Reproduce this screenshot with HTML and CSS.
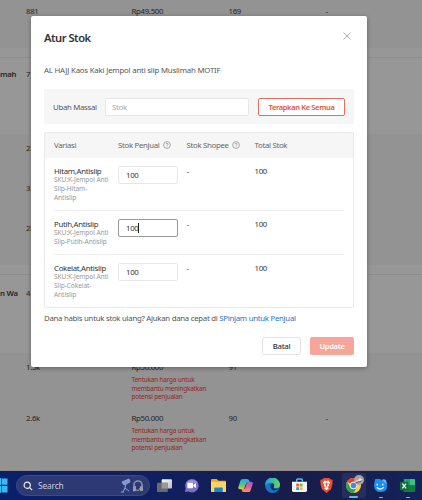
FILE: index.html
```
<!DOCTYPE html>
<html lang="id">
  <head>
    <meta charset="utf-8">
    <title>Atur Stok</title>
    <link rel="stylesheet" href="styles.css">
  </head>
  <body>
    <main class="products">
      <div class="row first shade"><b></b><span>881</span><span>Rp49.500</span><span>169</span><span>-</span></div>
      <div class="gap"></div>
      <div class="row product"><b>mah</b><span>7</span></div>
      <div class="row variant shade"><b></b><span>2.</span></div>
      <div class="row variant shade"><b></b><span>3.</span></div>
      <div class="row variant last shade"><b></b><span>2l</span></div>
      <div class="gap"></div>
      <div class="row product second"><b>n Wa</b><span>4</span></div>
      <div class="row priced shade"><b></b><span>1.5k</span>
        <div>Rp50.000<p class="warn">Tentukan harga untuk<br>membantu meningkatkan<br>potensi penjualan</p></div>
        <span>91</span><span></span></div>
      <div class="row priced shade"><b></b><span>2.6k</span>
        <div>Rp50.000<p class="warn">Tentukan harga untuk<br>membantu meningkatkan<br>potensi penjualan</p></div>
        <span>90</span><span>-</span></div>
    </main>

    <section class="modal">
      <header>
        <h1>Atur Stok</h1>
        <svg class="close" viewBox="0 0 8 8"><path d="M.5 .5l7 7M7.5 .5l-7 7"/></svg>
      </header>
      <p class="name">AL HAJJ Kaos Kaki Jempol anti slip Muslimah MOTIF</p>
      <div class="bulk">
        <label>Ubah Massal</label>
        <div class="input placeholder">Stok</div>
        <button class="apply">Terapkan Ke Semua</button>
      </div>
      <div class="stock">
        <div class="line head">
          <span>Variasi</span>
          <span class="help">Stok Penjual <svg viewBox="0 0 8 8"><circle cx="4" cy="4" r="3.4"/><path d="M3 3.2c0-1.4 2-1.4 2 0 0 .7-1 .7-1 1.5M4 5.5v.6"/></svg></span>
          <span class="help">Stok Shopee <svg viewBox="0 0 8 8"><circle cx="4" cy="4" r="3.4"/><path d="M3 3.2c0-1.4 2-1.4 2 0 0 .7-1 .7-1 1.5M4 5.5v.6"/></svg></span>
          <span>Total Stok</span>
        </div>
        <div class="line">
          <div class="variation">Hitam,Antislip<small>SKU:K-Jempol Anti<br>Slip-Hitam-<br>Antislip</small></div>
          <div class="input">100</div>
          <span>-</span>
          <span>100</span>
        </div>
        <div class="line short">
          <div class="variation">Putih,Antislip<small>SKU:K-Jempol Anti<br>Slip-Putih-Antislip</small></div>
          <div class="input focus">100<i class="caret"></i></div>
          <span>-</span>
          <span>100</span>
        </div>
        <div class="line">
          <div class="variation">Cokelat,Antislip<small>SKU:K-Jempol Anti<br>Slip-Cokelat-<br>Antislip</small></div>
          <div class="input">100</div>
          <span>-</span>
          <span>100</span>
        </div>
      </div>
      <p class="loan">Dana habis untuk stok ulang? Ajukan dana cepat di <a>SPinjam untuk Penjual</a></p>
      <footer>
        <button class="cancel">Batal</button>
        <button class="update">Update</button>
      </footer>
    </section>

    <nav class="taskbar">
      <svg class="start" viewBox="0 0 8 15"><path d="M0 0h1v7H0zM0 8h1v7H0zM1.5 .5h6v6.3h-6zM1.5 8h6v6.5h-6z"/></svg>
      <div class="search">
        <svg class="glass" viewBox="0 0 10 10"><circle cx="4.2" cy="4.2" r="3.1"/><path d="M6.6 6.6l2.6 2.6"/></svg>
        <span>Search</span>
        <svg class="doodle" viewBox="0 0 24 16">
          <path d="M2 4l7-3 1 3-6 3zM6 6l-1 4-2 4M5 10l4 3M1 14h3" fill="#8496cc" stroke="#8fa3d8"/>
          <path d="M14 11V7a4 4 0 0 1 8 0v4" fill="none" stroke="#8792ad" stroke-width="1.6"/>
          <path d="M13 9l3-1v5l-3 .5zM20 8l3 1v4l-3 0z" fill="#939cb0"/>
          <path d="M16 12q3 2 4-2" fill="none" stroke="#b1a57c"/>
        </svg>
      </div>
      <div class="apps">
        <svg viewBox="0 0 16 16">
          <defs><linearGradient id="tv" x1="0" y1="0" x2="1" y2="1"><stop offset="0" stop-color="#fff"/><stop offset="1" stop-color="#bbb"/></linearGradient></defs>
          <rect x="5" y="1.2" width="11" height="10" rx="1" fill="url(#tv)"/><rect x="0" y="5" width="11.5" height="10" rx="1" fill="#666b70"/><path d="M5 5h6.5v6.2H5z" fill="#999"/>
        </svg>
        <svg viewBox="0 0 16 16">
          <path d="M1 15l.8-4A7.2 7.2 0 1 1 5 14.5z" fill="#7a70c8"/><path d="M2 6a7 7 0 0 1 12-1z" fill="#9891da"/>
          <rect x="3.6" y="5" width="6" height="6" rx="1" fill="#fff"/><path d="M10 7.3l2.8-2v5.4L10 8.7z" fill="#fff"/>
        </svg>
        <svg viewBox="0 0 16 16">
          <path d="M0 2q0-1 1-1h5l2 2h7q1 0 1 1v4H0z" fill="#e9a820"/><path d="M0 4h16v10q0 1-1 1H1q-1 0-1-1z" fill="#ffd35c"/>
          <path d="M3.5 15v-4q0-1 1-1h7q1 0 1 1v4z" fill="#1785d2"/>
        </svg>
        <svg viewBox="0 0 16 16">
          <defs>
            <linearGradient id="cp1" x1="0" y1="0" x2="0" y2="1"><stop offset="0" stop-color="#22a5f2"/><stop offset=".6" stop-color="#58c877"/><stop offset="1" stop-color="#e9cc30"/></linearGradient>
            <linearGradient id="cp2" x1="0" y1="0" x2="0" y2="1"><stop offset="0" stop-color="#8e62ea"/><stop offset=".5" stop-color="#e45ca1"/><stop offset="1" stop-color="#ff984c"/></linearGradient>
          </defs>
          <path d="M5 1h5q1.500 0 2 2l.4 1.500h-2q-1.400 0-2 2L7 10q-.7 2-2.300 2H2Q-.2 12 .4 9.500L2.500 3Q3.200 1 5 1z" fill="url(#cp1)"/>
          <path d="M11 15H6q-1.500 0-2-2l-.3-1.300H6q1.300 0 2-2.200L9 6q.7-2 2.300-2H14q2.200 0 1.600 2.500L13.500 13q-.7 2-2.500 2z" fill="url(#cp2)"/>
        </svg>
        <svg viewBox="0 0 16 16">
          <defs>
            <linearGradient id="ed1" x1="0" y1="0" x2="1" y2="0"><stop offset="0" stop-color="#1aa0e8"/><stop offset="1" stop-color="#65d65c"/></linearGradient>
          </defs>
          <circle cx="8" cy="8" r="8" fill="#1277c9"/>
          <path d="M0 8a8 8 0 0 1 16-1q0 4-4.500 4-3-.1-2-1.800Q10.500 6 7 5 2.500 4.500 0 8z" fill="url(#ed1)"/>
          <path d="M5.500 9q0-2.500 2.500-3.500 2.500 1 1.500 3.500-1 2 2 2.300 2 .2 3.600-.8-2.100 3.200-5.600 2.800Q6 12.500 5.500 9z" fill="#11305f"/>
        </svg>
        <svg viewBox="0 0 16 16">
          <path d="M5 4V2q0-1 1-1h4q1 0 1 1v2" fill="none" stroke="#58bdf0" stroke-width="1.5"/>
          <path d="M0 4h16v9q0 2-2 2H2q-2 0-2-2z" fill="#f1f5f8"/>
          <path d="M4.500 6h3v3h-3z" fill="#ef5a30"/><path d="M8.300 6h3v3h-3z" fill="#7aba27"/><path d="M4.500 9.800h3v3h-3z" fill="#20a0e6"/><path d="M8.300 9.800h3v3h-3z" fill="#fbb91d"/>
        </svg>
        <svg viewBox="0 0 16 16">
          <path d="M5 0h6l1.500 1.500 1.500 0 .8 2-.5 1.500.2 1-1.700 6L8 16l-4.800-4-1.700-6 .2-1-.5-1.500.8-2h1.500z" fill="#ef4b2c"/>
          <path d="M8 3.200l2-.5 2 2.300-1.500 2 .3 1.500L9 9.700l1.500 1.300L8 13l-2.500-2L7 9.700 5.200 8.500 5.500 7 4 5l2-2.300z" fill="#fff"/><path d="M8 5v4M5.800 6l1.600.6M10.200 6l-1.600.6" stroke="#ef4b2c" fill="none"/>
        </svg>
        <div class="active">
          <svg viewBox="0 0 16 16">
            <circle cx="8" cy="8" r="8" fill="#ffcd40"/><path d="M8 8L1.100 4A8 8 0 0 1 15 4z" fill="#e84435"/>
            <path d="M1.100 4A8 8 0 0 0 8 16l3.500-6H4.500z" fill="#2ba24c"/>
            <circle cx="8" cy="8" r="3.9" fill="#fff"/><circle cx="8" cy="8" r="3" fill="#4285f4"/>
          </svg>
          <svg class="avatar" viewBox="0 0 10 10"><circle cx="5" cy="5" r="5" fill="#aaa49d"/><path d="M1 6l3-1 2-2 1 1 2 0-3 2-4 1z" fill="#e8e2dc"/><path d="M2 7.500l5-1" stroke="#5e5752"/></svg>
        </div>
        <div class="open">
          <svg viewBox="0 0 16 16">
            <path d="M2 2q0-1 1-1h4q1.500 0 2 1.500Q15 3 15 9q-.3 6-7 6T1 8z" fill="#1b8ff0"/><path d="M9 2q4-2 5 1l1 4-3-3z" fill="#59c7ff"/>
            <path d="M4.500 6v2M10.500 6v2M4 10q3.700 3.500 7.500 0" fill="none" stroke="#fff" stroke-width="1.3"/>
          </svg>
        </div>
        <div class="open">
          <svg viewBox="0 0 16 16">
            <path d="M4 1h6v14H5q-1 0-1-1z" fill="#21a366"/><path d="M10 1h5q1 0 1 1v6h-6z" fill="#33c481"/><path d="M4 8h12v6q0 1-1 1H5q-1 0-1-1z" fill="#107c41"/>
            <rect x="0" y="4" width="9" height="9" rx="1" fill="#0f703b"/><path d="M2.500 6l4 5M6.500 6l-4 5" stroke="#fff" stroke-width="1.3"/>
          </svg>
        </div>
      </div>
    </nav>
  </body>
</html>
```
FILE: styles.css
```
* {
  box-sizing: border-box;
}

body {
  margin: 0;
  width: 422px;
  height: 500px;
  overflow: hidden;
  display: flex;
  flex-direction: column;
  background: #979797;
  font-family: "Noto Sans", sans-serif;
  font-size: 7.8px;
  line-height: 10px;
  letter-spacing: -0.3px;
  color: #262626;
}

h1, p {
  margin: 0;
}

svg {
  display: block;
  flex: none;
}

button {
  font: inherit;
  letter-spacing: inherit;
  border-radius: 2px;
  padding: 0;
  height: 18px;
}

/* product list behind the dialog */
.products {
  height: 471px;
  flex: none;
  border-bottom: 1px solid #918783;
  overflow: hidden;
}

.row {
  display: grid;
  grid-template-columns: 26px 105.5px 97px 97px 1fr;
  height: 40px;
  padding-top: 9px;
  white-space: nowrap;
}

.row b {
  font-weight: 600;
}

.shade {
  background: #939393;
}

.first {
  height: 48px;
  padding-top: 6px;
}

.gap {
  height: 10px;
  border-bottom: 1px solid #8d8d8d;
}

.product {
  height: 76px;
  padding-top: 11px;
}

.variant.last {
  height: 51px;
}

.second {
  height: 78px;
  padding-top: 13px;
}

.priced {
  height: 51px;
  padding-top: 9px;
}

.priced + .priced {
  height: 67px;
}

.warn {
  margin-top: 4px;
  font-size: 6.4px;
  line-height: 8.7px;
  letter-spacing: -0.17px;
  color: #97251c;
}

/* dialog */
.modal {
  position: absolute;
  left: 31px;
  top: 16px;
  width: 336px;
  height: 351px;
  padding: 0 13px;
  background: #fff;
  border-radius: 2px;
  box-shadow: 0 1px 4px rgba(0, 0, 0, 0.35);
  color: #333;
}

.modal header {
  display: flex;
  justify-content: space-between;
  align-items: flex-start;
  height: 49px;
  padding-top: 14px;
}

h1 {
  font-size: 11.2px;
  line-height: 15px;
  font-weight: 600;
  letter-spacing: -0.5px;
}

.close {
  width: 8px;
  height: 8px;
  margin: 2px 3px 0;
  fill: none;
  stroke: #999;
  stroke-width: 0.8;
}

.name {
  height: 24px;
  letter-spacing: -0.19px;
  color: #555;
}

.bulk {
  display: flex;
  align-items: center;
  height: 35px;
  padding: 0 9px;
  background: #f6f6f6;
}

.bulk label {
  width: 52px;
  color: #555;
}

.input {
  display: flex;
  align-items: center;
  width: 60px;
  height: 18px;
  padding-left: 7px;
  background: #fff;
  border: 1px solid #e6e6e6;
  border-radius: 2px;
}

.input.placeholder {
  width: 144px;
  margin-right: 9px;
  padding-left: 6px;
  color: #aaa;
}

.input.focus {
  border-color: #999;
}

.caret {
  width: 1px;
  height: 10px;
  background: #222;
}

.apply {
  width: 87px;
  background: #fff;
  border: 1px solid #e0705e;
  color: #e0523d;
  font-size: 7.5px;
  font-weight: 600;
  letter-spacing: -0.35px;
}

.stock {
  margin-top: 8px;
  height: 176px;
  border: 1px solid #e8e8e8;
  border-radius: 2px;
}

.line {
  display: grid;
  grid-template-columns: 64px 68.5px 68px 1fr;
  align-items: start;
  height: 53px;
  margin: 0 9px;
  padding-top: 8px;
  border-bottom: 1px solid #f0f0f0;
}

.line.short {
  height: 44px;
}

.line:last-child {
  border-bottom: 0;
}

.line.head {
  height: 25px;
  margin: 0;
  padding: 7px 9px 0;
  background: #f6f6f6;
  border: 0;
  color: #666;
}

.help {
  display: flex;
  align-items: center;
}

.help svg {
  width: 8px;
  height: 8px;
  margin-left: 3px;
  fill: none;
  stroke: #888;
  stroke-width: 0.7;
}

.variation small {
  display: block;
  font-size: 6.6px;
  line-height: 8.8px;
  letter-spacing: -0.09px;
  color: #999;
  white-space: nowrap;
}

.loan {
  margin-top: 5px;
  letter-spacing: -0.27px;
  color: #555;
}

.loan a {
  color: #2673c8;
}

.modal footer {
  display: flex;
  justify-content: flex-end;
  gap: 9px;
  margin-top: 14px;
}

.cancel {
  width: 39px;
  background: #fff;
  border: 1px solid #e3e3e3;
  color: #333;
  font-weight: 500;
}

.update {
  width: 44px;
  background: #f5a599;
  border: 0;
  color: #fff;
  font-size: 7.5px;
  font-weight: 600;
}

/* windows taskbar */
.taskbar {
  display: flex;
  align-items: center;
  height: 29px;
  background: linear-gradient(90deg, #0a1f6b, #10205f 40%, #181d48 70%, #14225a);
}

.start {
  width: 8px;
  height: 15px;
  fill: #39b9f3;
}

.search {
  display: flex;
  align-items: center;
  width: 134px;
  height: 21px;
  margin-left: 8px;
  padding: 0 5px 0 6px;
  border: 1px solid #3d4a84;
  border-radius: 11px;
  background: #2c3972;
  color: #c6cbdd;
  font-size: 8.4px;
  letter-spacing: -0.15px;
}

.glass {
  width: 10px;
  height: 10px;
  margin-right: 5px;
  fill: none;
  stroke: #e8ebf5;
  stroke-width: 1.2;
}

.doodle {
  width: 24px;
  height: 16px;
  margin-left: auto;
}

.apps {
  display: grid;
  grid-template-columns: repeat(10, 27px);
  align-items: center;
  justify-items: center;
  margin-left: 1px;
}

.apps svg {
  width: 15px;
  height: 15px;
}

.active,
.open {
  position: relative;
  display: grid;
  place-items: center;
  width: 24px;
  height: 25px;
}

.active {
  background: #252e5e;
  border-radius: 3px;
}

.active::after,
.open::after {
  content: "";
  position: absolute;
  bottom: 0;
  width: 4px;
  height: 1px;
  border-radius: 1px;
  background: #a7abb8;
}

.active::after {
  width: 9px;
  height: 2px;
  background: #5fb9f0;
}

.apps .avatar {
  position: absolute;
  right: 2px;
  top: 2px;
  width: 10px;
  height: 10px;
}
```
